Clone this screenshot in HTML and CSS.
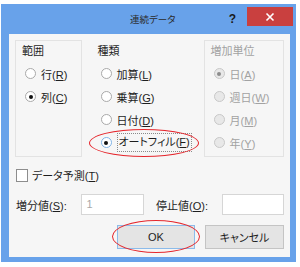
FILE: index.html
```html
<!DOCTYPE html>
<html lang="ja">
<head>
  <meta charset="UTF-8">
  <title>連続データ</title>
  <link rel="stylesheet" href="styles.css">
</head>
<body>
  <div class="dialog">
    <div class="titlebar">
      <span class="title">連続データ</span>
      <span class="help">?</span>
      <span class="close">
        <svg width="10" height="10" viewBox="0 0 10 10"><path d="M1.5 1.5 L8.5 8.5 M8.5 1.5 L1.5 8.5" stroke="#fff" stroke-width="1.6"/></svg>
      </span>
    </div>

    <div class="body">
      <div class="groups">
        <div class="group boxed range">
          <div class="group-label">範囲</div>
          <div class="radio"><span class="dot"></span><span>行(<u>R</u>)</span></div>
          <div class="radio"><span class="dot checked"></span><span>列(<u>C</u>)</span></div>
        </div>

        <div class="group kind">
          <div class="group-label">種類</div>
          <div class="radio"><span class="dot"></span><span>加算(<u>L</u>)</span></div>
          <div class="radio"><span class="dot"></span><span>乗算(<u>G</u>)</span></div>
          <div class="radio"><span class="dot"></span><span>日付(<u>D</u>)</span></div>
          <div class="radio"><span class="dot checked focus"></span><span class="focus-text">オートフィル(<u>F</u>)</span></div>
        </div>

        <div class="group boxed unit disabled">
          <div class="group-label">増加単位</div>
          <div class="radio"><span class="dot checked"></span><span>日(<u>A</u>)</span></div>
          <div class="radio"><span class="dot"></span><span>週日(<u>W</u>)</span></div>
          <div class="radio"><span class="dot"></span><span>月(<u>M</u>)</span></div>
          <div class="radio"><span class="dot"></span><span>年(<u>Y</u>)</span></div>
        </div>
      </div>

      <div class="check-row"><span class="checkbox"></span><span>データ予測(<u>T</u>)</span></div>

      <div class="value-row">
        <span class="value-label step">増分値(<u>S</u>):</span>
        <span class="field step-field">1</span>
        <span class="value-label stop">停止値(<u>O</u>):</span>
        <span class="field stop-field"></span>
      </div>

      <div class="button-row">
        <span class="button default">OK</span>
        <span class="button">キャンセル</span>
      </div>
    </div>
  </div>

  <!-- red marks drawn over the dialog -->
  <div class="mark mark-autofill"></div>
  <div class="mark mark-ok"></div>
</body>
</html>
```

FILE: styles.css
```css
body {
  margin: 0;
  width: 300px;
  height: 267px;
  background: #ffffff;
  font-family: "Liberation Sans", "Noto Sans CJK JP", sans-serif;
  font-size: 11px;
  font-feature-settings: "palt";
  color: #1e1e1e;
  position: relative;
  overflow: hidden;
}

.dialog {
  margin: 4px 0 0 1px;
  width: 295px;
  height: 258px;
  box-sizing: border-box;
  padding: 0 6px 5px 8px;
  background: #68a2ea;
  display: flex;
  flex-direction: column;
}

.titlebar {
  height: 30px;
  display: flex;
  align-items: center;
}

.title {
  margin-left: 121px;
  font-size: 9.5px;
  color: #2a2a2a;
}

.help {
  margin-left: auto;
  margin-right: 11px;
  font-family: "Liberation Sans", sans-serif;
  font-weight: bold;
  font-size: 12px;
  color: #1a1a1a;
}

.close {
  align-self: flex-start;
  margin-top: 3px;
  margin-right: -3px;
  width: 46px;
  height: 19px;
  background: #c9403f;
  display: flex;
  justify-content: center;
  align-items: center;
}

.body {
  flex: 1;
  background: #f6f6f6;
  padding: 0 6px;
  display: flex;
  flex-direction: column;
}

.groups {
  display: flex;
  margin-top: 6px;
}

.group {
  border: 1px solid transparent;
  padding: 2px 0 2px 6px;
}

.boxed {
  border-color: #e3e3e3;
}

.range {
  width: 59px;
}

.kind {
  margin-left: 8px;
  width: 106px;
  padding-left: 7px;
}

.unit {
  width: 73px;
}

.group-label {
  height: 19px;
  line-height: 16px;
}

.radio {
  height: 23px;
  margin-left: 3px;
  display: flex;
  align-items: center;
  gap: 5px;
  white-space: nowrap;
}

.dot {
  width: 9px;
  height: 9px;
  border: 1px solid #a9a9a9;
  border-radius: 50%;
  background: #ffffff;
  display: flex;
  justify-content: center;
  align-items: center;
}

.dot.checked::after {
  content: "";
  width: 4px;
  height: 4px;
  border-radius: 50%;
  background: #111111;
}

.dot.focus {
  border-color: #7fb3e6;
}

.focus-text {
  border: 1px dotted #8a8a8a;
  padding: 0 1px;
  line-height: 17px;
}

.disabled {
  color: #a2a2a2;
}

.disabled .dot {
  background: #e8e8e8;
  border-color: #c8c8c8;
}

.disabled .dot.checked::after {
  background: #8c8c8c;
}

.check-row {
  margin-top: 8px;
  height: 20px;
  display: flex;
  align-items: center;
  gap: 4px;
}

.checkbox {
  margin-left: 1px;
  width: 10px;
  height: 11px;
  border: 1px solid #8d8d8d;
  background: #ffffff;
}

.value-row {
  margin-top: 9px;
  display: flex;
  align-items: center;
}

.value-label {
  padding-left: 1px;
}

.step {
  width: 66px;
}

.stop {
  margin-left: 11px;
  width: 67px;
}

.field {
  height: 19px;
  box-sizing: content-box;
  border: 1px solid #d6d6d6;
  background: #ffffff;
  color: #a8a8a8;
  padding-left: 4px;
  line-height: 19px;
}

.step-field {
  width: 57px;
}

.stop-field {
  width: 56px;
}

.button-row {
  margin-top: 10px;
  display: flex;
  justify-content: flex-end;
  gap: 10px;
}

.button {
  width: 77px;
  height: 22px;
  border: 1px solid #c4c4c4;
  background: #e4e4e4;
  display: flex;
  justify-content: center;
  align-items: center;
}

.button.default {
  width: 76px;
  border-color: #8cbbea;
}

.mark {
  position: absolute;
  border: 1px solid #e5262c;
  border-radius: 50%;
}

.mark-autofill {
  left: 89px;
  top: 129px;
  width: 108px;
  height: 26px;
}

.mark-ok {
  left: 112px;
  top: 220px;
  width: 86px;
  height: 31px;
}
```
